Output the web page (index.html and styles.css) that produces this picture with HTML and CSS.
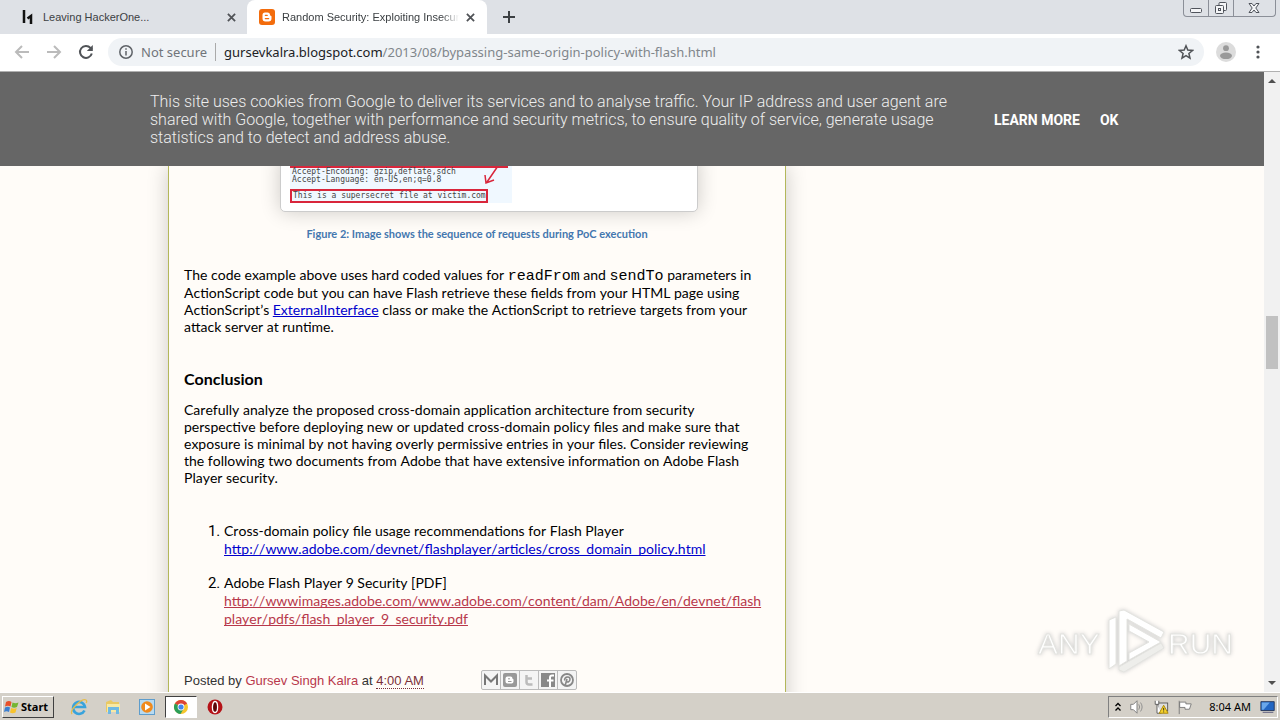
FILE: index.html
```html
<!DOCTYPE html>
<html lang="en">
<head>
	<meta charset="utf-8">
	<title>Random Security: Exploiting Insecure crossdomain.xml</title>
	<meta name="viewport" content="width=device-width, initial-scale=1.0">
	<link rel="stylesheet" href="styles.css">
</head>
<body>
	<header class="tabstrip">
		<div class="tab">
			<svg class="favicon" viewBox="0 0 16 16"><path d="M4 1v13M11 8v7M7.500 9.500L11 7V10" fill="none" stroke="#111" stroke-width="2.500"/></svg>
			<span class="tab-title">Leaving HackerOne...</span>
			<button class="tab-close" aria-label="Close tab"><svg viewBox="0 0 10 10"><path d="M1 1l8 8M9 1L1 9"/></svg></button>
		</div>
		<div class="tab active">
			<svg class="favicon" viewBox="0 0 16 16"><rect width="16" height="16" rx="3" fill="#f36c0c"/><path d="M6 3.500h2.500a2.500 2.500 0 0 1 2.500 2.500c0 1 1.500.3 1.500 1.500v2a3 3 0 0 1-3 3H6.500a3 3 0 0 1-3-3V6A2.500 2.500 0 0 1 6 3.500z" fill="#fff"/><path d="M6.300 6.300h2M6.300 9.600h3.400" stroke="#f36c0c" stroke-width="1.200" stroke-linecap="round"/></svg>
			<span class="tab-title">Random Security: Exploiting Insecur</span>
			<button class="tab-close" aria-label="Close tab"><svg viewBox="0 0 10 10"><path d="M1 1l8 8M9 1L1 9"/></svg></button>
		</div>
		<button class="new-tab" aria-label="New tab"><svg viewBox="0 0 12 12"><path d="M6 0v12M0 6h12"/></svg></button>
		<div class="window-buttons">
			<button aria-label="Minimize"><svg width="14" height="14" viewBox="0 0 14 14"><rect x="1.500" y="7.500" width="11" height="4" rx="1"/></svg></button>
			<button aria-label="Restore"><svg width="14" height="14" viewBox="0 0 14 14"><rect x="5" y="1.500" width="7.500" height="8" rx="1"/><rect x="1.500" y="4.500" width="8" height="8" rx="1"/><rect x="4.500" y="7.500" width="2" height="2"/></svg></button>
			<button class="wide" aria-label="Close"><svg width="14" height="14" viewBox="0 0 14 14"><path d="M2 2.500h3l2 2.500 2-2.500h3L8.800 7l3.200 4.500H9L7 9l-2 2.500H2L5.200 7z"/></svg></button>
		</div>
	</header>

	<nav class="toolbar">
		<button class="nav off" aria-label="Back"><svg viewBox="0 0 16 16"><path d="M15 8H2M8 2L2 8l6 6"/></svg></button>
		<button class="nav off" aria-label="Forward"><svg viewBox="0 0 16 16"><path d="M1 8h13M8 2l6 6-6 6"/></svg></button>
		<button class="nav" aria-label="Reload"><svg viewBox="0 0 16 16"><path d="M13.800 9.500A6 6 0 1 1 12.500 3.900L14 5.500"/><path d="M14.800 1v6H8.800z" fill="#505357" stroke="none"/></svg></button>
		<div class="address">
			<svg class="info" viewBox="0 0 14 14"><circle cx="7" cy="7" r="6.200"/><path d="M7 6v4.500M7 3.300v1.500"/></svg>
			<span class="secure">Not secure</span>
			<span class="url"><b>gursevkalra.blogspot.com</b>/2013/08/bypassing-same-origin-policy-with-flash.html</span>
			<button class="star" aria-label="Bookmark this page"><svg viewBox="0 0 16 16"><path d="M8 1.800l1.800 4.300 4.700.4-3.600 3 1.100 4.600L8 11.700l-4 2.400 1.100-4.600-3.600-3 4.700-.4z"/></svg></button>
		</div>
		<button class="profile" aria-label="Profile"><svg viewBox="0 0 20 20"><circle cx="10" cy="10" r="10" fill="#dcdcdc"/><circle cx="10" cy="6.200" r="2.900" fill="#999"/><ellipse cx="10" cy="13.800" rx="6" ry="3.300" fill="#999"/></svg></button>
		<button class="more" aria-label="Menu"><svg viewBox="0 0 4 14"><circle cx="2" cy="2" r="1.600"/><circle cx="2" cy="7" r="1.600"/><circle cx="2" cy="12" r="1.600"/></svg></button>
	</nav>

	<div class="viewport">
		<main class="page">
			<div class="cookies">
				<p>This site uses cookies from Google to deliver its services and to analyse traffic. Your IP address and user agent are shared with Google, together with performance and security metrics, to ensure quality of service, generate usage statistics and to detect and address abuse.</p>
				<a href="#">LEARN MORE</a>
				<a href="#">OK</a>
			</div>

			<article class="post">
				<figure>
					<div class="shot">
						<div class="dump">
							<div class="cut"></div>
							<div class="line">Accept-Encoding: gzip,deflate,sdch</div>
							<div class="line">Accept-Language: en-US,en;q=0.8</div>
							<div class="secret">This is a supersecret file at victim.com</div>
							<svg class="arrow" viewBox="0 0 20 22"><path d="M16 0L3 19M1 12l1 8 8-3"/></svg>
						</div>
					</div>
					<figcaption>Figure 2: Image shows the sequence of requests during PoC execution</figcaption>
				</figure>

				<p>The code example above uses hard coded values for <code>readFrom</code> and <code>sendTo</code> parameters in<br>
				ActionScript code but you can have Flash retrieve these fields from your HTML page using<br>
				ActionScript’s <a href="#">ExternalInterface</a> class or make the ActionScript to retrieve targets from your<br>
				attack server at runtime.</p>

				<h3>Conclusion</h3>
				<p>Carefully analyze the proposed cross-domain application architecture from security<br>
				perspective before deploying new or updated cross-domain policy files and make sure that<br>
				exposure is minimal by not having overly permissive entries in your files. Consider reviewing<br>
				the following two documents from Adobe that have extensive information on Adobe Flash<br>
				Player security.</p>

				<ol>
					<li>Cross-domain policy file usage recommendations for Flash Player<br>
					<a href="#">http://www.adobe.com/devnet/flashplayer/articles/cross_domain_policy.html</a></li>
					<li>Adobe Flash Player 9 Security [PDF]<br>
					<a class="red" href="#">http://wwwimages.adobe.com/www.adobe.com/content/dam/Adobe/en/devnet/flash<br>player/pdfs/flash_player_9_security.pdf</a></li>
				</ol>

				<footer>
					<span>Posted by <a class="author" href="#">Gursev Singh Kalra</a> at <a class="time" href="#">4:00 AM</a></span>
					<div class="share">
						<a href="#" aria-label="Email this"><svg viewBox="0 0 18 18"><path d="M3 14V4.500l6 6 6-6V14" fill="none" stroke="#777" stroke-width="2"/></svg></a>
						<a href="#" aria-label="BlogThis!"><svg viewBox="0 0 18 18"><rect x="2" y="2" width="14" height="14" rx="2" fill="#999"/><path d="M6.500 5.500h3a2 2 0 0 1 2 2c0 .8 1 .3 1 1.300v1.700a2 2 0 0 1-2 2h-4a2 2 0 0 1-2-2v-3a2 2 0 0 1 2-2z" fill="#fff"/><path d="M7 7.800h2M7 10.500h3.500" stroke="#999"/></svg></a>
						<a href="#" aria-label="Share to Twitter"><svg viewBox="0 0 18 18"><path d="M6.500 4v7q0 2.500 2.500 2.500h3.500M6.500 7.500h5.500" fill="none" stroke="#bbb" stroke-width="2.500"/></svg></a>
						<a href="#" aria-label="Share to Facebook"><svg viewBox="0 0 18 18"><rect x="2" y="2" width="14" height="14" fill="#888"/><path d="M11 16V6.500q0-2 2-2h2M8 9.500h6.500" fill="none" stroke="#fff" stroke-width="2"/></svg></a>
						<a href="#" aria-label="Share to Pinterest"><svg viewBox="0 0 18 18"><circle cx="9" cy="9" r="6" fill="#f4f4f4" stroke="#888" stroke-width="1.800"/><path d="M7 15l2-7M6.800 9.500C5.500 6 12 4.500 12 8s-3 3.500-3.500 2" fill="none" stroke="#888" stroke-width="1.600"/></svg></a>
					</div>
				</footer>
			</article>

			<svg class="watermark" viewBox="0 0 210 70">
				<g fill="#fff" stroke="#e4e4e0" stroke-linejoin="round">
					<text x="8" y="47">ANY</text>
					<text x="138" y="47">RUN</text>
					<path d="M79 13l7-3v47l-7 5z"/>
					<path d="M89 4l5-1 40 22-3 6-34-19v42l-8 5z"/>
					<path d="M99 17l32 18-32 18v-7l20-11-20-11z"/>
					<path d="M89 60l42-24 3 5-40 24-5-2z" fill="#eeeeeb"/>
				</g>
			</svg>
		</main>
		<div class="scrollbar">
			<svg viewBox="0 0 8 4"><path d="M0 4l4-4 4 4z"/></svg>
			<div class="thumb"></div>
			<svg viewBox="0 0 8 4"><path d="M0 0l4 4 4-4z"/></svg>
		</div>
	</div>

	<footer class="taskbar">
		<button class="start"><svg viewBox="0 0 16 16"><path d="M2 3q3-2 5.500 0L6.500 7.500Q4 6 1 7.500z" fill="#e8502a"/><path d="M8.500 3.500q3 1.500 6 0L13 8q-3 1.500-5.500 0z" fill="#74b532"/><path d="M1 8.500q3-1.500 5 0L5 13q-2.500-1.500-5 0z" fill="#3c7fd0"/><path d="M7.200 9q3 1.500 5.500 0l-1.200 4.500q-3 1.500-5.500 0z" fill="#f8c32c"/></svg>Start</button>
		<div class="quick">
			<button aria-label="Internet Explorer"><svg viewBox="0 0 18 18"><path d="M14.500 12.500A6 6 0 1 1 15 9H4" fill="none" stroke="#38a3dc" stroke-width="2.600"/><path d="M2 16C-1 12 12 0 16 2c1 .6.800 1.800.2 3" fill="none" stroke="#e6bd4c" stroke-width="1.300"/></svg></button>
			<button aria-label="Explorer"><svg viewBox="0 0 18 18"><path d="M2 4l5-2 2 2h6v10H2z" fill="#e9c965"/><path d="M3 6h13v8H3z" fill="#f8e9a4"/><path d="M4 16V9h11v7h-3v-4H7v4z" fill="#6fb9e3"/></svg></button>
			<button aria-label="Media Player"><svg viewBox="0 0 18 18"><rect x="1.500" y="1.500" width="15" height="15" fill="#b7daf1" stroke="#5e9dcc"/><circle cx="9" cy="9" r="5.800" fill="#f08a1d"/><path d="M7 5.500v7L12.500 9z" fill="#fff"/></svg></button>
			<button class="pressed" aria-label="Chrome"><svg viewBox="0 0 18 18"><circle cx="9" cy="9" r="7" fill="#f6c62d"/><path d="M9 9L2.900 5.500A7 7 0 0 1 15.100 5.500z" fill="#dc4437"/><path d="M9 9L2.900 5.500A7 7 0 0 0 8.500 16l3-5z" fill="#2b9e58"/><circle cx="9" cy="9" r="3.400" fill="#fff"/><circle cx="9" cy="9" r="2.600" fill="#4286ee"/></svg></button>
			<button aria-label="Opera"><svg viewBox="0 0 18 18"><circle cx="9" cy="9" r="7.500" fill="#b51218"/><ellipse cx="9" cy="9" rx="2.600" ry="5.500" fill="#5d0508" stroke="#fff" stroke-width="1.300"/></svg></button>
		</div>
		<div class="tray">
			<svg class="chevrons" viewBox="0 0 6 10"><path d="M.5 4L3 1.500 5.500 4M.5 8.500L3 6l2.500 2.500"/></svg>
			<svg viewBox="0 0 18 18"><path d="M2 6h3l4-4v14l-4-4H2z" fill="#fff" stroke="#777"/><path d="M11 6q2 3 0 6M13 4q3.500 5 0 10" fill="none" stroke="#888"/></svg>
			<svg viewBox="0 0 18 18"><rect x="5.500" y="4.500" width="11" height="9" fill="#ddd" stroke="#555"/><path d="M2.500 2v4h4V2M4.500 6v10h5" fill="#fff" stroke="#555"/><path d="M12 7l5 9H7z" fill="#f6d22c" stroke="#a88400"/><path d="M12 10v3M12 14v1" stroke="#222"/></svg>
			<svg viewBox="0 0 18 18"><path d="M2.500 2v15M3 3.500h7v2h6l-2 6H9v-2H3z" fill="#fff" stroke="#777"/></svg>
			<time>8:04 AM</time>
			<svg class="desktop" viewBox="0 0 18 18"><path d="M1 3h15v10H1z" fill="#2266c2" stroke="#235"/><path d="M2 4h9L4 12H2z" fill="#69a7ea"/><path d="M3 15h12" stroke="#557"/></svg>
		</div>
	</footer>
</body>
</html>
```
FILE: styles.css
```css
* {
	box-sizing: border-box;
}
body {
	display: flex;
	flex-direction: column;
	height: 100vh;
	margin: 0;
	overflow: hidden;
	font-family: "Liberation Sans", Arial, sans-serif;
	background-color: #fffcf8;
}
button {
	padding: 0;
	border: 0;
	background: none;
	font: inherit;
}
svg {
	display: block;
	flex: none;
}

/* tabs */
.tabstrip {
	display: flex;
	height: 34px;
	background-color: #dee1e6;
	font: 11px "Liberation Sans", Tahoma, sans-serif;
	color: #3c4043;
}
.tab {
	display: flex;
	align-items: center;
	gap: 7px;
	width: 240px;
	padding: 0 12px;
}
.tab:first-child {
	width: 247px;
	padding: 0 11px 0 20px;
}
.tab.active {
	background-color: #fff;
	border-radius: 8px 8px 0 0;
}
.favicon {
	width: 16px;
	height: 16px;
}
.tab-title {
	flex: 1;
	white-space: nowrap;
}
.active .tab-title {
	-webkit-mask-image: linear-gradient(to right, #000 90%, transparent);
	mask-image: linear-gradient(to right, #000 90%, transparent);
}
.tab-close svg {
	width: 9px;
	height: 9px;
	stroke: #505357;
	stroke-width: 2;
}
.new-tab svg {
	width: 12px;
	height: 12px;
	margin-left: 16px;
	stroke: #3c4043;
	stroke-width: 2;
}
.window-buttons {
	display: flex;
	height: 17px;
	margin: 0 4px 0 auto;
	border: 1px solid #8b8f98;
	border-top: 0;
	border-radius: 0 0 4px 4px;
}
.window-buttons button {
	width: 25px;
	padding-left: 5px;
	border-right: 1px solid #8b8f98;
}
.window-buttons .wide {
	width: 41px;
	padding-left: 13px;
	border: 0;
}
.window-buttons svg {
	fill: #f4f5f7;
	stroke: #50545c;
}

/* toolbar */
.toolbar {
	display: flex;
	align-items: center;
	height: 38px;
	padding: 0 20px 2px 14px;
	background-color: #fff;
	border-bottom: 1px solid #b0b0b0;
	font: 13px "Noto Sans", Tahoma, sans-serif;
}
.nav {
	margin-right: 16px;
}
.nav svg {
	width: 16px;
	height: 16px;
	fill: none;
	stroke: #505357;
	stroke-width: 2;
}
.nav.off svg {
	stroke: #bbb;
}
.address {
	display: flex;
	flex: 1;
	align-items: center;
	height: 28px;
	margin: 0 12px 0 -2px;
	padding: 0 10px 0 11px;
	background-color: #f0f3f6;
	border-radius: 14px;
	white-space: nowrap;
}
.info {
	width: 14px;
	height: 14px;
	margin-right: 8px;
	fill: none;
	stroke: #5f6368;
	stroke-width: 1.500;
}
.secure {
	padding-right: 8px;
	border-right: 1px solid #aaa;
	color: #70757a;
}
.url {
	flex: 1;
	padding-left: 8px;
	color: #80868b;
}
.url b {
	font-weight: normal;
	color: #202124;
}
.star svg {
	width: 16px;
	height: 16px;
	fill: none;
	stroke: #505357;
	stroke-width: 1.500;
}
.profile svg {
	width: 20px;
	height: 20px;
}
.more {
	margin-left: 20px;
}
.more svg {
	width: 4px;
	height: 14px;
	fill: #505357;
}

/* page */
.viewport {
	display: flex;
	flex: 1;
	min-height: 0;
}
.page {
	position: relative;
	flex: 1;
	overflow: hidden;
}
.cookies {
	position: relative;
	z-index: 1;
	display: flex;
	align-items: center;
	height: 94px;
	padding: 2px 0 0 150px;
	background-color: #666;
	font: 14px Roboto, Arial, sans-serif;
}
.cookies p {
	width: 800px;
	margin: 0 44px 0 0;
	font-size: 16px;
	font-weight: 300;
	line-height: 18px;
	color: #eee;
}
.cookies a {
	margin-right: 20px;
	font-weight: bold;
	color: #fff;
	text-decoration: none;
}
.post {
	width: 618px;
	height: 100%;
	margin-left: 168px;
	padding: 0 15px;
	border: solid #b3b75a;
	border-width: 0 1px;
	box-shadow: 0 0 20px rgba(0, 0, 0, 0.2);
	font-family: Lato, Calibri, sans-serif;
	font-size: 14px;
	font-kerning: none;
	line-height: 17px;
	white-space: nowrap;
	color: #000;
}
.post p {
	margin: 0;
}
.post a {
	color: #00c;
	text-decoration-skip-ink: none;
}
.post .red {
	color: #b8384b;
}
figure {
	display: flex;
	flex-direction: column;
	align-items: center;
	margin: 0 0 24px;
}
.shot {
	width: 418px;
	margin: -10px 0 0 24px;
	padding: 8px 9px;
	background-color: #fff;
	border: 1px solid #ccc;
	border-radius: 0 0 5px 5px;
	box-shadow: 0 0 20px rgba(0, 0, 0, 0.2);
}
.dump {
	position: relative;
	width: 222px;
	background-color: #f0f8ff;
	font: 8px/8px "DejaVu Sans Mono", monospace;
	color: #444;
}
.cut {
	width: 218px;
	height: 3px;
	border: solid #d9263b;
	border-width: 0 1px 2px;
}
.line {
	padding-left: 2px;
}
.secret {
	width: 198px;
	margin-top: 5px;
	padding: 1px;
	border: 2px solid #d9263b;
}
.arrow {
	position: absolute;
	top: -2px;
	right: 8px;
	width: 20px;
	height: 22px;
	fill: none;
	stroke: #d9263b;
	stroke-width: 1.500;
}
figcaption {
	margin-top: 13px;
	font-size: 11px;
	font-weight: bold;
	font-kerning: auto;
	color: #4477af;
}
code {
	font: 15px "Liberation Mono", monospace;
	line-height: 1;
}
h3 {
	margin: 34px 0 13px;
	font-size: 16px;
	line-height: 19px;
}
ol {
	margin: 36px 0 0;
	padding-left: 40px;
}
li {
	margin-bottom: 16px;
	line-height: 18px;
}
li::marker {
	font-family: Roboto, Arial, sans-serif;
	font-size: 15px;
}
.post footer {
	display: flex;
	align-items: center;
	margin-top: 42px;
	font: 13px "Liberation Sans", Arial, sans-serif;
	color: #333;
}
.post .author {
	color: #b8384b;
	text-decoration: none;
}
.post .time {
	color: #7a3038;
	text-decoration: none;
	border-bottom: 1px dotted #7a3038;
}
.share {
	display: flex;
	margin-left: 57px;
	border: 1px solid #bbb;
	border-radius: 2px;
	background-color: #f4f4f4;
}
.share a + a {
	border-left: 1px solid #bbb;
}
.share svg {
	width: 18px;
	height: 18px;
}
.watermark {
	position: absolute;
	right: 24px;
	bottom: 15px;
	width: 210px;
	height: 70px;
	font: 30px "Liberation Sans", Arial, sans-serif;
	filter: drop-shadow(0 0 2px #ccc);
}
.scrollbar {
	display: flex;
	flex-direction: column;
	align-items: center;
	width: 16px;
	padding: 7px 0;
	background-color: #f1f1f1;
}
.scrollbar svg {
	width: 8px;
	height: 4px;
	fill: #505050;
}
.thumb {
	width: 12px;
	height: 53px;
	margin: 233px 0 auto;
	background-color: #c1c1c1;
}

/* taskbar */
.taskbar {
	display: flex;
	align-items: center;
	height: 28px;
	padding: 1px 2px 0;
	background-color: #d4d0c8;
	box-shadow: inset 0 1px #fff;
	font: 11px "Noto Sans", Tahoma, sans-serif;
}
.start {
	display: flex;
	align-items: center;
	gap: 1px;
	width: 52px;
	height: 22px;
	padding-left: 1px;
	border: 1px solid;
	border-color: #fff #404040 #404040 #fff;
	font-weight: bold;
}
.start svg,
.tray svg {
	width: 16px;
	height: 16px;
}
.quick {
	display: flex;
	margin-left: 9px;
}
.quick button {
	display: flex;
	align-items: center;
	justify-content: center;
	width: 32px;
	height: 22px;
	margin-right: 2px;
}
.quick svg {
	width: 18px;
	height: 18px;
}
.quick .pressed {
	border: 1px solid;
	border-color: #404040 #fff #fff #404040;
	background-color: #fff;
}
.tray {
	display: flex;
	align-items: center;
	gap: 8px;
	height: 22px;
	margin-left: auto;
	padding: 0 1px 0 6px;
	border: 1px solid;
	border-color: #808080 #fff #fff #808080;
}
.tray .chevrons {
	width: 6px;
	height: 10px;
	fill: none;
	stroke: #000;
	stroke-width: 1.300;
}
.tray time {
	margin: 0 1px 0 8px;
}
```
